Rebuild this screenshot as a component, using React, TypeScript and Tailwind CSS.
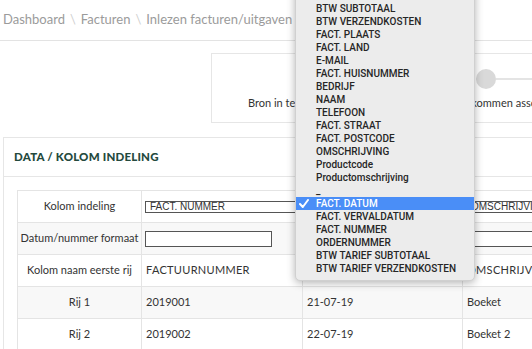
import React from "react";

const menuItems = [
  "FACT. TOTAAL",
  "BTW TOTAAL",
  "BTW SUBTOTAAL",
  "BTW VERZENDKOSTEN",
  "FACT. PLAATS",
  "FACT. LAND",
  "E-MAIL",
  "FACT. HUISNUMMER",
  "BEDRIJF",
  "NAAM",
  "TELEFOON",
  "FACT. STRAAT",
  "FACT. POSTCODE",
  "OMSCHRIJVING",
  "Productcode",
  "Productomschrijving",
  "_",
  "FACT. DATUM",
  "FACT. VERVALDATUM",
  "FACT. NUMMER",
  "ORDERNUMMER",
  "BTW TARIEF SUBTOTAAL",
  "BTW TARIEF VERZENDKOSTEN",
];

function Select({ value }: { value: string }) {
  return (
    <div className="h-[12px] w-full border border-[#555] bg-white pl-[4px] text-[10px] leading-[10px] text-[#333] font-['Liberation_Sans',sans-serif] whitespace-nowrap overflow-hidden">
      {value}
    </div>
  );
}

function Input({ w }: { w: string }) {
  return <div className={`h-[16px] ${w} border border-[#555] bg-white`} />;
}

export default function App() {
  return (
    <div className="relative w-[532px] h-[349px] overflow-hidden bg-white font-['Lato',sans-serif]">
      {/* breadcrumb */}
      <div className="h-[41px] border-b border-[#e3e3e3] flex items-center pl-[3px] text-[13px] text-[#9b9b9b] whitespace-nowrap">
        <span>Dashboard</span>
        <span className="mx-[5px] text-[#cfcfcf]">\</span>
        <span>Facturen</span>
        <span className="mx-[5px] text-[#cfcfcf]">\</span>
        <span>Inlezen facturen/uitgaven</span>
      </div>

      {/* top box */}
      <div className="pt-[12px] pl-[211px]">
        <div className="h-[70px] w-[400px] border border-[#e6e6e6] flex pl-[36px] pt-[15px] text-[11px] text-[#333] whitespace-nowrap">
          <div className="w-[228px] pt-[26px]">Bron in tekst</div>
          <div className="flex-1 flex flex-col">
            <div className="flex items-center h-[20px]">
              <div className="w-[20px] h-[20px] rounded-full bg-[#d9d9d9] shrink-0" />
              <div className="flex-1 h-[2px] bg-[#e4e4e4]" />
            </div>
            <div className="pt-[6px] ml-[-50px]">Binnengekommen associaties</div>
          </div>
        </div>
      </div>

      {/* card */}
      <div className="mt-[14px] ml-[3px] w-[600px] border border-[#e6e6e6]">
        <div className="h-[39px] border-b border-[#e6e6e6] flex items-center pl-[10px] text-[11.5px] font-black tracking-[0.2px] text-[#24493d]">
          DATA / KOLOM INDELING
        </div>
        <div className="pl-[13px] pt-[13px]">
          <table className="table-fixed border-collapse w-[580px] text-[11px] text-[#333]">
            <colgroup>
              <col className="w-[124px]" />
              <col className="w-[161px]" />
              <col className="w-[160px]" />
              <col />
            </colgroup>
            <tbody>
              <tr className="h-[32px] bg-white">
                <td className="border border-[#e4e4e4] text-center">Kolom indeling</td>
                <td className="border border-[#e4e4e4] px-[3px]"><Select value="FACT. NUMMER" /></td>
                <td className="border border-[#e4e4e4] px-[3px]"><Select value="FACT. DATUM" /></td>
                <td className="border border-[#e4e4e4] px-[3px]"><Select value="OMSCHRIJVING" /></td>
              </tr>
              <tr className="h-[32px] bg-[#f8f8f8]">
                <td className="border border-[#e4e4e4] text-center whitespace-nowrap">Datum/nummer formaat</td>
                <td className="border border-[#e4e4e4] px-[3px]"><Input w="w-[127px]" /></td>
                <td className="border border-[#e4e4e4] px-[3px]"><Input w="w-[127px]" /></td>
                <td className="border border-[#e4e4e4] px-[3px]"><Input w="w-[127px]" /></td>
              </tr>
              <tr className="h-[32px] bg-white">
                <td className="border border-[#e4e4e4] text-center whitespace-nowrap">Kolom naam eerste rij</td>
                <td className="border border-[#e4e4e4] px-[4px] tracking-[0.3px]">FACTUURNUMMER</td>
                <td className="border border-[#e4e4e4] px-[4px] tracking-[0.3px]">FACTUURDATUM</td>
                <td className="border border-[#e4e4e4] px-[4px] tracking-[0.3px]">OMSCHRIJVING</td>
              </tr>
              <tr className="h-[32px] bg-[#f8f8f8]">
                <td className="border border-[#e4e4e4] text-center">Rij 1</td>
                <td className="border border-[#e4e4e4] px-[4px]">2019001</td>
                <td className="border border-[#e4e4e4] px-[4px]">21-07-19</td>
                <td className="border border-[#e4e4e4] px-[4px]">Boeket</td>
              </tr>
              <tr className="h-[32px] bg-white">
                <td className="border border-[#e4e4e4] text-center">Rij 2</td>
                <td className="border border-[#e4e4e4] px-[4px]">2019002</td>
                <td className="border border-[#e4e4e4] px-[4px]">22-07-19</td>
                <td className="border border-[#e4e4e4] px-[4px]">Boeket 2</td>
              </tr>
            </tbody>
          </table>
        </div>
      </div>

      {/* native select menu */}
      <div className="absolute left-[295px] top-[-28px] w-[180px] pt-[3px] pb-[5px] bg-[#ececec] rounded-b-[5px] shadow-[0_2px_8px_rgba(0,0,0,0.3)] border border-[#d0d0d0] font-['Roboto',sans-serif] text-[10px] font-medium text-[#262626]">
        {menuItems.map((item) => {
          const sel = item === "FACT. DATUM";
          return (
            <div
              key={item}
              className={`h-[13px] flex items-center pl-[20px] whitespace-nowrap relative ${sel ? "bg-[#4a8ef7] text-white" : ""}`}
            >
              {sel && (
                <svg className="absolute left-[3px] top-[2px]" width="10" height="9" viewBox="0 0 10 9">
                  <path d="M1 5 L3.8 8 L9 1" stroke="white" strokeWidth="2" fill="none" strokeLinecap="round" strokeLinejoin="round" />
                </svg>
              )}
              {item}
            </div>
          );
        })}
      </div>
    </div>
  );
}
